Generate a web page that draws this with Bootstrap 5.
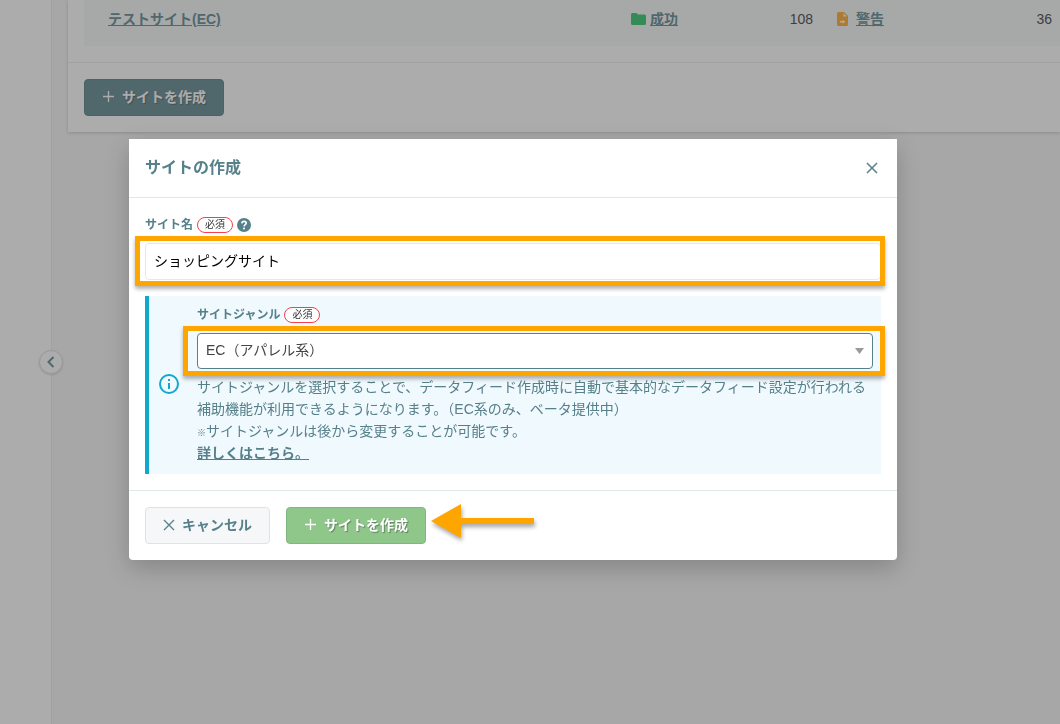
<!DOCTYPE html>
<html lang="ja">
<head>
<meta charset="utf-8">
<meta name="viewport" content="width=device-width, initial-scale=1">
<title>サイトの作成</title>
<link href="https://cdn.jsdelivr.net/npm/bootstrap@5.3.0/dist/css/bootstrap.min.css" rel="stylesheet">
<style>
  :root { --teal: #56808a; --line: #e1eaea; --mark: #ffa500; }
  body { font-family: "Liberation Sans", "Noto Sans CJK JP", sans-serif; font-size: 14px; line-height: 22px; color: #333; background: #f5f5f5; overflow: hidden; }
  a { color: var(--teal); font-weight: 700; }
  svg { flex: none; }

  .side-rail { width: 52px; background: #fff; border-right: 1px solid #e6ecec; }
  .rail-toggle { top: 50%; right: -12px; width: 24px; height: 24px; transform: translateY(-50%); background: #fff; border: 1px solid #d5dddd; color: var(--teal); box-shadow: 0 1px 2px rgba(0,0,0,.15); z-index: 1; }
  .site-panel { background: #fff; box-shadow: 0 1px 3px rgba(0,0,0,.2); }
  .site-list { table-layout: fixed; margin: 0 0 16px; }
  .site-list td { background: #f4f9f8; border: 0; padding: 8px 8px 16px 16px; color: #333; }
  .site-list td:first-child { padding-left: 24px; }
  .col-ok { width: 206px; }
  .col-warn { width: 239px; }
  .panel-foot { border-top: 1px solid #e6ecec; padding: 16px; }

  .btn { --bs-btn-font-size: 14px; --bs-btn-font-weight: 700; --bs-btn-line-height: 22px; --bs-btn-border-radius: 4px; height: 37px; padding: 0 16px 2px; display: inline-flex; align-items: center; justify-content: center; gap: 7px; }
  .btn-create { width: 140px; color: #fff; text-shadow: 1px 1px 1px rgba(0,0,0,.35); }
  .btn-teal { background: #56808a; border-color: #4f7781; }
  .btn-green { background: #8fc78b; border-color: #82b67f; }
  .btn-cancel { width: 125px; background: #f5f7f9; border-color: #dee3e4; color: var(--teal); }

  .modal-backdrop { --bs-backdrop-bg: #4a4a4a; --bs-backdrop-opacity: .46; }
  .modal { padding-right: 34px; overflow: hidden; }
  .modal-dialog { max-width: 768px; margin: 139px auto 0; }
  .modal-content { border: 0; border-radius: 0 0 4px 4px; box-shadow: 0 8px 24px rgba(0,0,0,.2); }
  .modal-header { padding: 16px; border-color: var(--line); height: 59px; }
  .modal-title { font-size: 16px; line-height: 26px; font-weight: 700; color: var(--teal); }
  .close-x { width: 18px; height: 18px; color: var(--teal); }
  .modal-footer { padding: 16px; gap: 16px; border-color: var(--line); justify-content: flex-start; }
  .modal-footer > * { margin: 0; }

  .field-head { margin-bottom: 7px; }
  .field-label { font-size: 12px; line-height: 22px; font-weight: 700; color: var(--teal); }
  .required-tag { font-size: 10px; line-height: 14px; width: 36px; border: 1px solid #f2414e; background: #fff; color: #333; }
  .form-control, .form-select { font-size: 14px; line-height: 22px; border-radius: 4px; padding: 0 8px 2px; }
  .form-control { height: 37px; padding-bottom: 4px; border-color: var(--line); color: #000; }
  .form-select { height: 36px; border-color: var(--teal); color: #444; background-size: 9px 6px; background-position: right 8px center;
    background-image: url("data:image/svg+xml,%3csvg xmlns='http://www.w3.org/2000/svg' viewBox='0 0 9 6'%3e%3cpath fill='%23999' d='M0 0h9L4.500 6z'/%3e%3c/svg%3e"); }
  .spotlight::after { content: ""; position: absolute; border: 5px solid var(--mark); box-shadow: 0 3px 4px rgba(0,0,0,.3); pointer-events: none; z-index: 2; }
  .spotlight-name::after { inset: -7px -4px -6px -10px; }
  .spotlight-genre { margin-bottom: 7px; }
  .spotlight-genre::after { inset: -7px -12px -7px -14px; }

  .info-box { background: #f0f9fd; border-left: 4px solid #10a9cd; padding: 8px 8px 10px 10px; gap: 18px; color: var(--teal); }
  .note-mark { font-size: 9px; line-height: 9px; font-weight: 700; }
  .pointer-arrow { margin-left: -11px; overflow: visible; filter: drop-shadow(1px 3px 2px rgba(0,0,0,.35)); }
</style>
</head>
<body>
<div class="d-flex vh-100">
  <aside class="side-rail position-relative flex-shrink-0">
    <button type="button" class="rail-toggle position-absolute rounded-circle p-0 d-flex align-items-center justify-content-center" aria-label="メニューを閉じる">
      <svg width="8" height="12" viewBox="0 0 8 12" fill="none" stroke="currentColor" stroke-width="2"><path d="M6.500 1 1.500 6l5 5"/></svg>
    </button>
  </aside>
  <main class="flex-grow-1 ps-3">
    <section class="site-panel">
      <div class="ps-3">
        <table class="table site-list">
          <colgroup><col><col class="col-ok"><col class="col-warn"></colgroup>
          <tbody>
            <tr>
              <td><a href="#">テストサイト(EC)</a></td>
              <td>
                <div class="d-flex align-items-center">
                  <svg class="me-1" width="15" height="12" viewBox="0 0 15 12" fill="#24c264"><path d="M1.500 0h4l1.500 1.600h6.500A1.500 1.500 0 0 1 15 3.100v7.400a1.500 1.500 0 0 1-1.500 1.500h-12A1.500 1.500 0 0 1 0 10.500v-9A1.500 1.500 0 0 1 1.500 0z"/></svg>
                  <a href="#">成功</a><span class="ms-auto">108</span>
                </div>
              </td>
              <td>
                <div class="d-flex align-items-center">
                  <svg class="me-2" width="11" height="14" viewBox="0 0 11 14"><path fill="#ffa31a" d="M1.500 0H7l4 4v8.500a1.500 1.500 0 0 1-1.500 1.500h-8A1.500 1.500 0 0 1 0 12.500v-11A1.500 1.500 0 0 1 1.500 0z"/><path fill="#fff" d="M6.500 1.200v3.300h3.300zM2.800 9h3V7.700L8.200 9.700 5.800 11.700v-1.200h-3z"/></svg>
                  <a href="#">警告</a><span class="ms-auto">36</span>
                </div>
              </td>
            </tr>
          </tbody>
        </table>
      </div>
      <div class="panel-foot">
        <button type="button" class="btn btn-create btn-teal">
          <svg width="13" height="13" viewBox="0 0 13 13" stroke="currentColor" stroke-width="1.300"><path d="M6.500 1v11M1 6.500h11"/></svg>サイトを作成
        </button>
      </div>
    </section>
  </main>
</div>

<div class="modal-backdrop show"></div>
<div class="modal show d-block" role="dialog" aria-modal="true" aria-labelledby="dialogTitle">
  <div class="modal-dialog">
    <form class="modal-content">
      <div class="modal-header">
        <h1 class="modal-title" id="dialogTitle">サイトの作成</h1>
        <button type="button" class="close-x border-0 bg-transparent p-0 d-flex align-items-center justify-content-center" aria-label="閉じる">
          <svg width="12" height="12" viewBox="0 0 12 12" stroke="currentColor" stroke-width="1.500"><path d="m1 1 10 10M11 1 1 11"/></svg>
        </button>
      </div>
      <div class="modal-body p-3">
        <div class="field-head d-flex align-items-center gap-1">
          <label class="field-label" for="siteName">サイト名</label>
          <span class="required-tag rounded-pill text-center">必須</span>
          <svg width="14" height="14" viewBox="0 0 13 13"><circle cx="6.500" cy="6.500" r="6.500" fill="#56808a"/><path d="M4.500 5c.1-1.400 1-1.900 2-1.900 1.200 0 2.100.7 2.100 1.700 0 1.400-2 1.400-2 3" fill="none" stroke="#fff" stroke-width="1.500"/><circle cx="6.500" cy="9.800" r=".95" fill="#fff"/></svg>
        </div>
        <div class="spotlight spotlight-name position-relative mb-3">
          <input type="text" class="form-control" id="siteName" value="ショッピングサイト">
        </div>
        <div class="info-box d-flex align-items-center">
          <svg width="20" height="20" viewBox="0 0 20 20" fill="none" stroke="#10a9cd" stroke-width="2"><circle cx="10" cy="10" r="9"/><path d="M10 9v6M10 5v2"/></svg>
          <div class="flex-grow-1">
            <div class="field-head d-flex align-items-center gap-1">
              <label class="field-label" for="siteGenre">サイトジャンル</label>
              <span class="required-tag rounded-pill text-center">必須</span>
            </div>
            <div class="spotlight spotlight-genre position-relative">
              <select class="form-select" id="siteGenre"><option>EC（アパレル系）</option></select>
            </div>
            <div>サイトジャンルを選択することで、データフィード作成時に自動で基本的なデータフィード設定が行われる補助機能が利用できるようになります。（EC系のみ、ベータ提供中）</div>
            <div><span class="note-mark">※</span>サイトジャンルは後から変更することが可能です。</div>
            <a class="d-block" href="#">詳しくはこちら。</a>
          </div>
        </div>
      </div>
      <div class="modal-footer">
        <button type="button" class="btn btn-cancel">
          <svg width="12" height="12" viewBox="0 0 12 12" stroke="currentColor" stroke-width="1.300"><path d="m1 1 10 10M11 1 1 11"/></svg>キャンセル
        </button>
        <button type="submit" class="btn btn-create btn-green">
          <svg width="13" height="13" viewBox="0 0 13 13" stroke="currentColor" stroke-width="1.300"><path d="M6.500 1v11M1 6.500h11"/></svg>サイトを作成
        </button>
        <svg class="pointer-arrow" width="103" height="37" viewBox="0 0 103 37" fill="#ffa500"><path d="M0 14 30-3v14h73v6H30v14z"/></svg>
      </div>
    </form>
  </div>
</div>
<script src="https://cdn.jsdelivr.net/npm/bootstrap@5.3.0/dist/js/bootstrap.bundle.min.js"></script>
</body>
</html>
